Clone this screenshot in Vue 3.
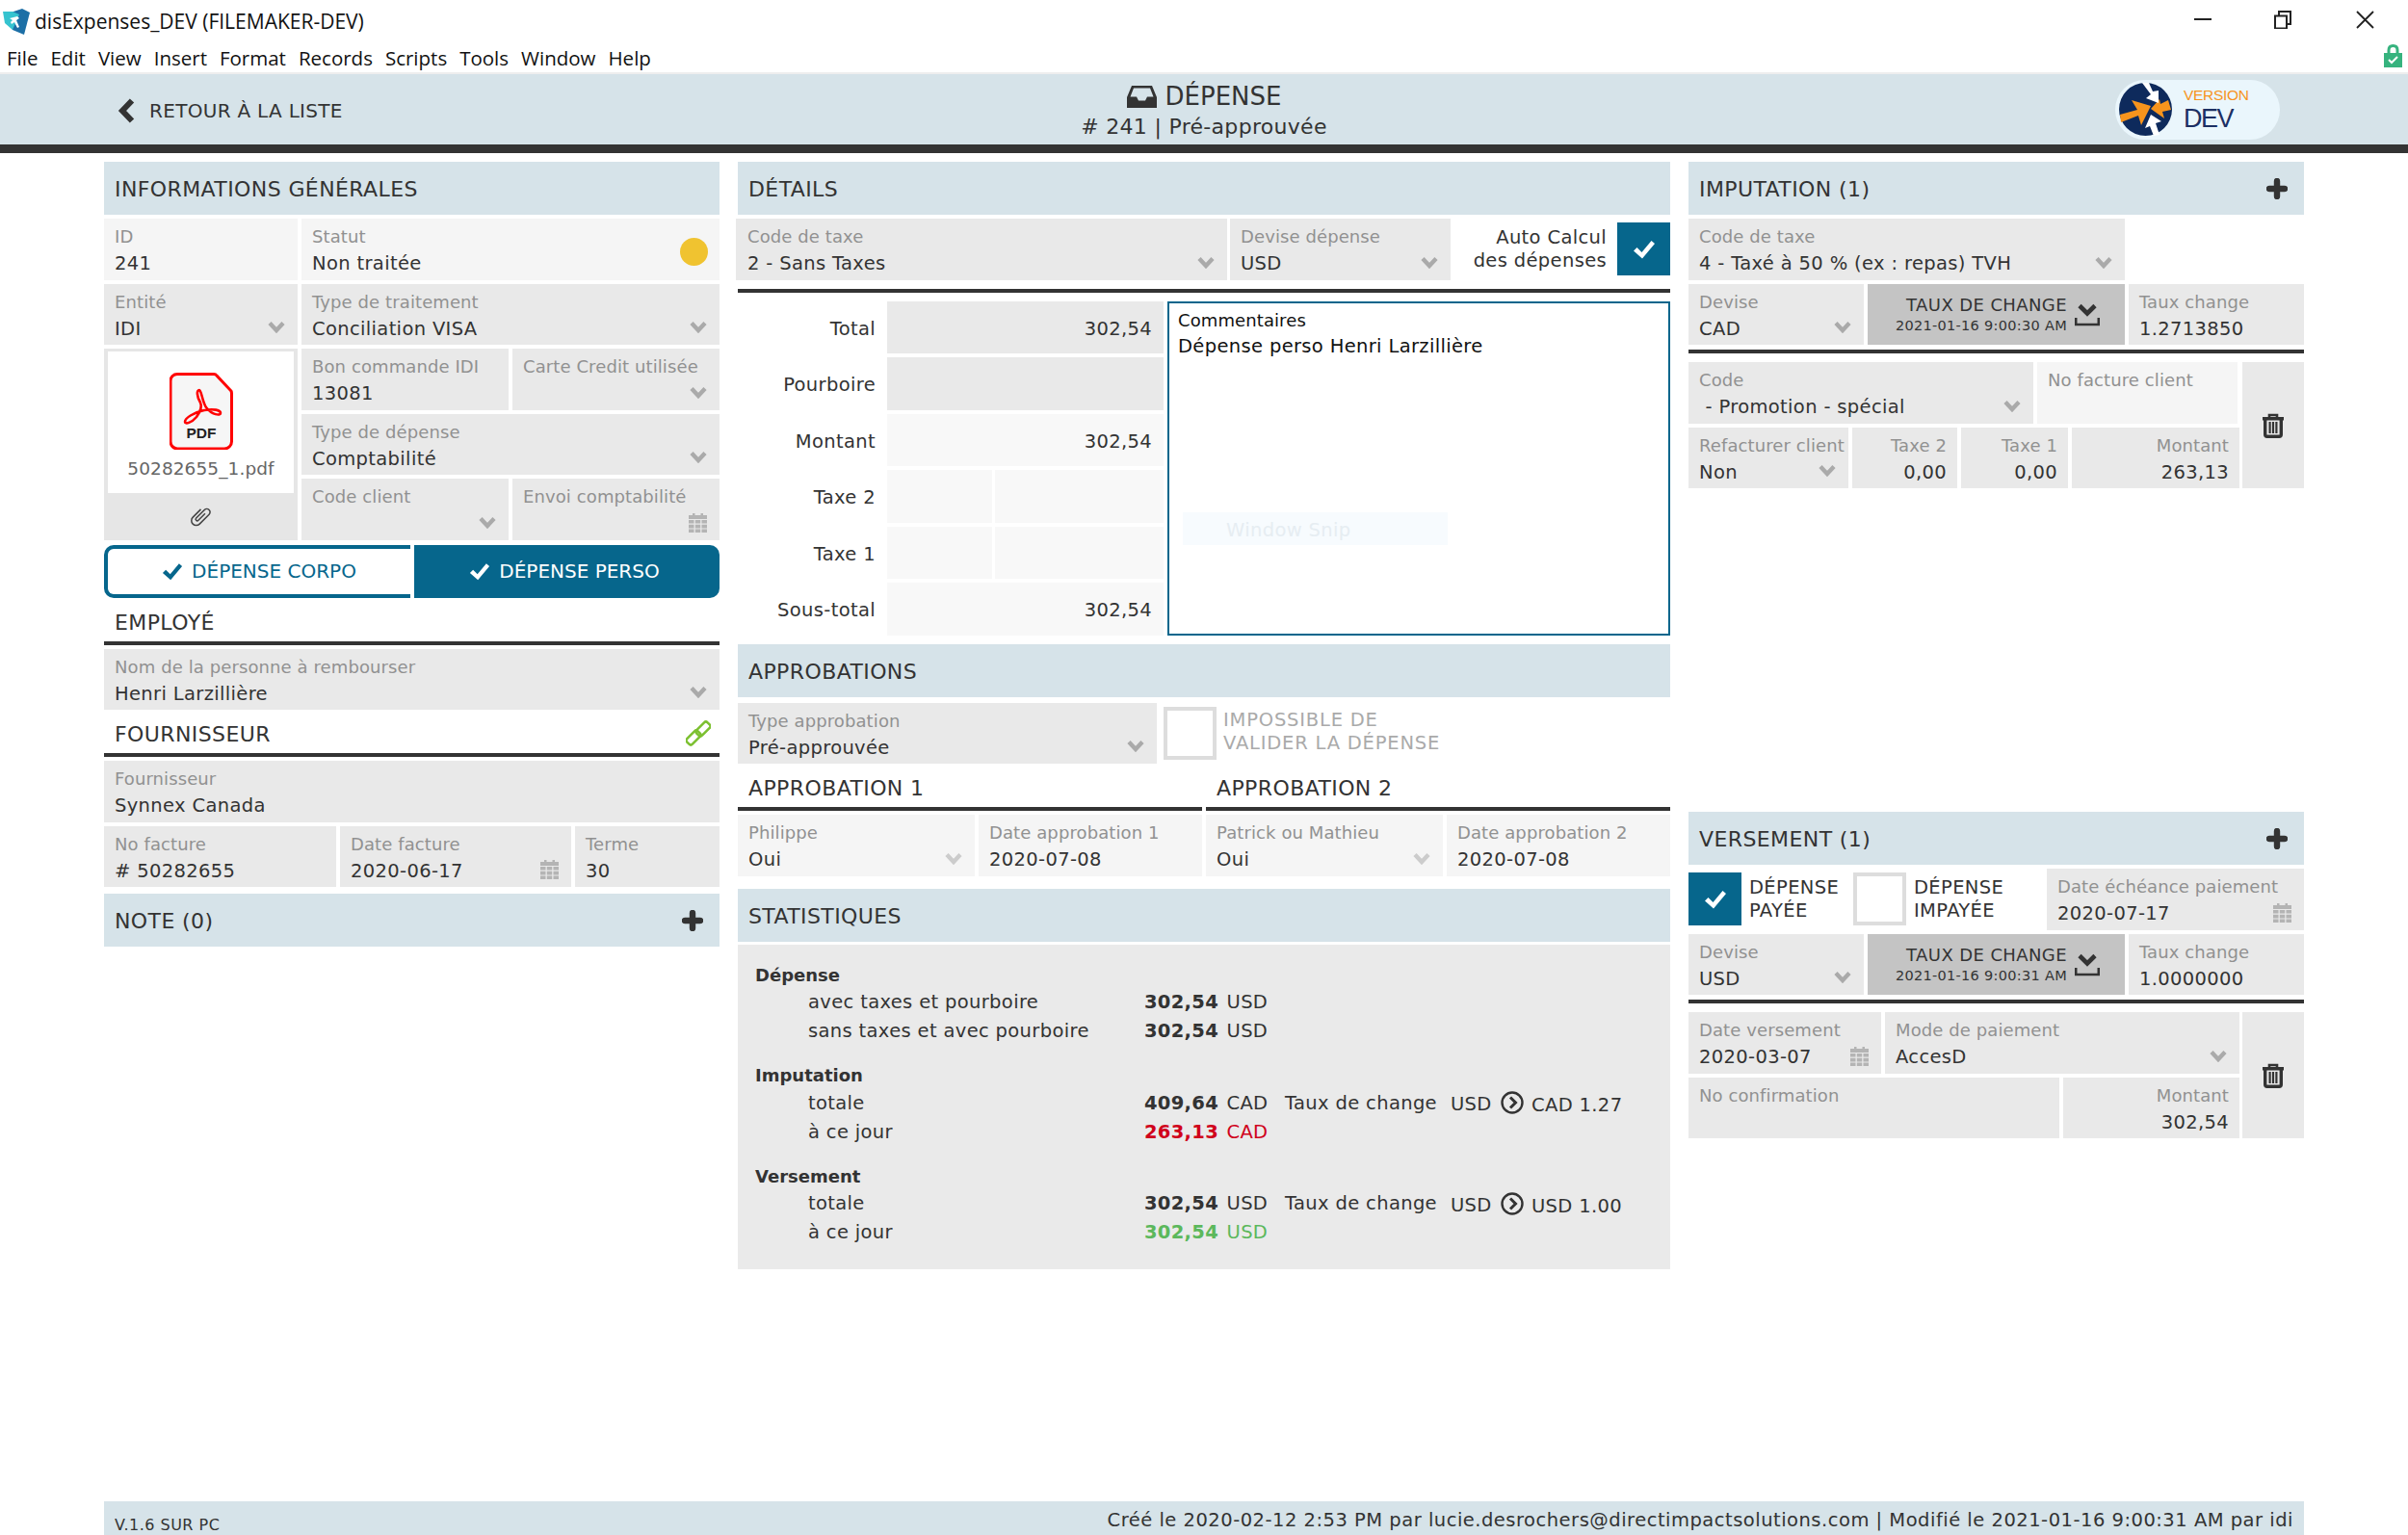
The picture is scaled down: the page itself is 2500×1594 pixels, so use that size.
<template>
  <div class="app">
    <!-- shared icons -->
    <svg class="defs" aria-hidden="true">
      <symbol id="i-chev" viewBox="0 0 18 13"><path d="M2 2.500 9 10l7-7.500" fill="none" stroke="currentColor" stroke-width="4.400" /></symbol>
      <symbol id="i-cal" viewBox="0 0 19 20">
        <path fill="currentColor" d="M4 0h2.500v3H4zM12.500 0H15v3h-2.500zM0 2h19v4H0zM0 7h5.500v3.600H0zM6.800 7h5.400v3.600H6.800zM13.500 7H19v3.600h-5.500zM0 11.800h5.500v3.600H0zM6.800 11.800h5.400v3.600H6.800zM13.500 11.800H19v3.600h-5.500zM0 16.500h5.500V20H0zM6.800 16.500h5.400V20H6.800zM13.500 16.500H19V20h-5.500z" />
      </symbol>
      <symbol id="i-check" viewBox="0 0 24 20"><path fill="currentColor" d="m1 11.500 3.500-3.500L9.500 13 19.500 1 23 4 10 19.500z" /></symbol>
      <symbol id="i-plus" viewBox="0 0 22 22"><path d="M11 3v16M3 11h16" stroke="currentColor" stroke-width="6.400" stroke-linecap="round" /></symbol>
      <symbol id="i-trash" viewBox="0 0 24 26">
        <path fill="none" stroke="currentColor" stroke-width="2.600" d="M8 5V2h8v3" />
        <path fill="currentColor" d="M1 4h22v3.500H1z" />
        <path fill="none" stroke="currentColor" stroke-width="3.400" d="M3.700 6v16.300q0 2 2 2h12.600q2 0 2-2V6" />
        <path fill="currentColor" d="M7.500 9h2.200v12H7.500zM10.900 9h2.200v12h-2.200zM14.300 9h2.200v12h-2.200z" />
      </symbol>
      <symbol id="i-dl" viewBox="0 0 26 24">
        <path d="M5 2.500 13 10.500l8-8" fill="none" stroke="currentColor" stroke-width="4.600" />
        <path d="M1.200 15v7h23.600v-7" fill="none" stroke="currentColor" stroke-width="2.600" />
      </symbol>
      <symbol id="i-go" viewBox="0 0 24 24">
        <circle cx="12" cy="12" r="10.500" fill="none" stroke="currentColor" stroke-width="2.400" />
        <path d="m10 6.500 5.500 5.500-5.500 5.500" fill="none" stroke="currentColor" stroke-width="3" />
      </symbol>
    </svg>

    <div class="titlebar">
      <svg class="fm-icon" viewBox="0 0 28 27">
        <path fill="#1c6fa6" d="M8 4 20 0l8 4-6 23-12-5z" />
        <path fill="#35c3cf" d="M0 3h10l7 3-7 16-8-7z" />
        <path fill="#fff" d="m7 10 8-2 2 2-3 2 3 7-2 1-3-6-3 2-1-2 2-2z" />
      </svg>
      <span class="title-text">disExpenses_DEV (FILEMAKER-DEV)</span>
      <div class="win-btns">
        <svg class="win-min" viewBox="0 0 18 2"><path d="M0 1h18" stroke="#222" stroke-width="2" /></svg>
        <svg class="win-max" viewBox="0 0 18 19"><path d="M1 5.500h12v13H1zM5 5V1h12v13h-4" fill="none" stroke="#222" stroke-width="2" /></svg>
        <svg class="win-close" viewBox="0 0 19 19"><path d="m1 1 17 17M18 1 1 18" stroke="#222" stroke-width="1.800" /></svg>
      </div>
    </div>

    <div class="menubar">
      <span v-for="item in menu" :key="item">{{ item }}</span>
      <svg class="lock" viewBox="0 0 19 24">
        <path d="M5 10V6q0-4.500 4.500-4.500T14 6v4" fill="none" stroke="#36b37e" stroke-width="3" />
        <path fill="#36b37e" d="M0 9h19v15H0z" />
        <path d="m5 16 3 3 6-6" fill="none" stroke="#fff" stroke-width="2" />
      </svg>
    </div>

    <header class="topbar">
      <div class="back">
        <svg class="back-ico" viewBox="0 0 19 26"><path d="M15 2.500 5 13l10 10.500" fill="none" stroke="#333" stroke-width="6" /></svg>
        <span>RETOUR À LA LISTE</span>
      </div>
      <div class="top-center">
        <div class="top-title">
          <svg class="tray" viewBox="0 0 31 23">
            <path fill="#333" d="M5 0h21l5 12v11H0V12zm2 2.500L3.500 11.500H10l2 4h7l2-4h6.500L24 2.500z" />
          </svg>
          <span>DÉPENSE</span>
        </div>
        <div class="top-sub"># 241 | Pré-approuvée</div>
      </div>
      <div class="version">
        <svg class="logo" viewBox="0 0 55 55">
          <circle cx="27.500" cy="27.500" r="27.500" fill="#0e2a5c" />
          <path fill="#f7941d" d="m1 33 18-5-6-10 20 6-10 20-3-10-18 7zM33 27l9-10 1 5 8-4 3 10-9 2 2 7z" />
          <path fill="#fff" d="M24 0h7l4 9 6-1v13l-13-5 5-4zM33 33l11 7-6 2 4 12-6 1-4-10-5 2z" />
        </svg>
        <div class="version-txt">
          <span class="version-lbl">VERSION</span>
          <span class="version-val">DEV</span>
        </div>
      </div>
    </header>

    <main class="columns">
      <!-- left column -->
      <section>
        <h3 class="head">INFORMATIONS GÉNÉRALES</h3>
        <div class="row r-id">
          <div class="field light"><div><div class="lbl">ID</div><div class="val">241</div></div></div>
          <div class="field light">
            <div><div class="lbl">Statut</div><div class="val">Non traitée</div></div>
            <span class="dot"></span>
          </div>
        </div>
        <div class="row r-id">
          <div class="field">
            <div><div class="lbl">Entité</div><div class="val">IDI</div></div>
            <svg class="chev"><use href="#i-chev" /></svg>
          </div>
          <div class="field">
            <div><div class="lbl">Type de traitement</div><div class="val">Conciliation VISA</div></div>
            <svg class="chev"><use href="#i-chev" /></svg>
          </div>
        </div>
        <div class="row r-id">
          <div class="pdf-box">
            <div class="pdf-card">
              <svg class="pdf-ico" viewBox="0 0 66 80">
                <path d="M8 1.500h38q2 0 3 1.500l15 16q.5 1 .5 3v49.500a7.500 7.500 0 0 1-7.500 7.500H8a7.500 7.500 0 0 1-7-7.500V8.500a7 7 0 0 1 7-7z" fill="#f6f6f6" stroke="#f00" stroke-width="3" />
                <path d="M31 18c-3 0-3 6 1 13 2 4 1 8-4 15-5 6-12 8-12 5 0-4 10-10 20-12s17 0 17 3-9 2-15-6c-4-6-5-18-7-18z" fill="none" stroke="#f00" stroke-width="2.600" />
                <text x="33" y="68" text-anchor="middle" class="pdf-txt">PDF</text>
              </svg>
              <div class="pdf-name">50282655_1.pdf</div>
            </div>
            <div class="pdf-attach">
              <svg class="clip" viewBox="0 0 30 30">
                <path d="M9 9v13a5.500 5.500 0 0 0 11 0V6.500a3.800 3.800 0 0 0-7.600 0V20a1.800 1.800 0 0 0 3.600 0V9" transform="rotate(45 15 15)" fill="none" stroke="#444" stroke-width="1.700" />
              </svg>
            </div>
          </div>
          <div class="stack">
            <div class="row-in r-half">
              <div class="field"><div><div class="lbl">Bon commande IDI</div><div class="val">13081</div></div></div>
              <div class="field">
                <div><div class="lbl">Carte Credit utilisée</div><div class="val">&nbsp;</div></div>
                <svg class="chev"><use href="#i-chev" /></svg>
              </div>
            </div>
            <div class="field">
              <div><div class="lbl">Type de dépense</div><div class="val">Comptabilité</div></div>
              <svg class="chev"><use href="#i-chev" /></svg>
            </div>
            <div class="row-in r-half">
              <div class="field">
                <div><div class="lbl">Code client</div><div class="val">&nbsp;</div></div>
                <svg class="chev"><use href="#i-chev" /></svg>
              </div>
              <div class="field">
                <div><div class="lbl">Envoi comptabilité</div><div class="val">&nbsp;</div></div>
                <svg class="cal"><use href="#i-cal" /></svg>
              </div>
            </div>
          </div>
        </div>
        <div class="toggle">
          <button class="tog tog-off"><svg class="tog-check"><use href="#i-check" /></svg>DÉPENSE CORPO</button>
          <button class="tog tog-on"><svg class="tog-check"><use href="#i-check" /></svg>DÉPENSE PERSO</button>
        </div>

        <div class="sub-head">EMPLOYÉ</div>
        <div class="row">
          <div class="field grow">
            <div><div class="lbl">Nom de la personne à rembourser</div><div class="val">Henri Larzillière</div></div>
            <svg class="chev"><use href="#i-chev" /></svg>
          </div>
        </div>

        <div class="sub-head">
          <span>FOURNISSEUR</span>
          <svg class="link-ico" viewBox="0 0 26 27">
            <g fill="none" stroke="#7cc030" stroke-width="2.500">
              <rect x="14" y="1" width="8" height="16" rx="2.500" transform="rotate(45 18 9)" />
              <rect x="4" y="10" width="8" height="16" rx="2.500" transform="rotate(45 8 18)" />
            </g>
          </svg>
        </div>
        <div class="row">
          <div class="field grow"><div><div class="lbl">Fournisseur</div><div class="val">Synnex Canada</div></div></div>
        </div>
        <div class="row r-fact">
          <div class="field"><div><div class="lbl">No facture</div><div class="val"># 50282655</div></div></div>
          <div class="field">
            <div><div class="lbl">Date facture</div><div class="val">2020-06-17</div></div>
            <svg class="cal"><use href="#i-cal" /></svg>
          </div>
          <div class="field"><div><div class="lbl">Terme</div><div class="val">30</div></div></div>
        </div>
        <h3 class="head note-head left-note">
          <span>NOTE (0)</span>
          <svg class="plus"><use href="#i-plus" /></svg>
        </h3>
      </section>

      <!-- middle column -->
      <section>
        <h3 class="head">DÉTAILS</h3>
        <div class="row r-det">
          <div class="field">
            <div><div class="lbl">Code de taxe</div><div class="val">2 - Sans Taxes</div></div>
            <svg class="chev"><use href="#i-chev" /></svg>
          </div>
          <div class="field">
            <div><div class="lbl">Devise dépense</div><div class="val">USD</div></div>
            <svg class="chev"><use href="#i-chev" /></svg>
          </div>
          <div class="auto">
            <div class="auto-txt">Auto Calcul<br />des dépenses</div>
            <div class="box box-on"><svg><use href="#i-check" /></svg></div>
          </div>
        </div>
        <div class="rule"></div>
        <div class="det-grid">
          <div class="amounts">
            <div v-for="a in amounts" :key="a.label" class="amount">
              <span class="amount-lbl">{{ a.label }}</span>
              <div v-if="a.split" class="amount-split">
                <span class="cell light"></span>
                <span class="cell light"></span>
              </div>
              <span v-else class="cell num" :class="{ light: a.light }">{{ a.value }}</span>
            </div>
          </div>
          <div class="comments">
            <div class="com-lbl">Commentaires</div>
            <div class="com-val">Dépense perso Henri Larzillière</div>
            <div class="snip">Window Snip</div>
          </div>
        </div>

        <h3 class="head appr-head">APPROBATIONS</h3>
        <div class="row r-appr">
          <div class="field">
            <div><div class="lbl">Type approbation</div><div class="val">Pré-approuvée</div></div>
            <svg class="chev"><use href="#i-chev" /></svg>
          </div>
          <div class="box box-off"></div>
          <div class="appr-txt">IMPOSSIBLE DE<br />VALIDER LA DÉPENSE</div>
        </div>
        <div class="appr-cols">
          <div>
            <div class="sub-head">APPROBATION 1</div>
            <div class="row r-apr">
              <div class="field light">
                <div><div class="lbl">Philippe</div><div class="val">Oui</div></div>
                <svg class="chev pale"><use href="#i-chev" /></svg>
              </div>
              <div class="field light"><div><div class="lbl">Date approbation 1</div><div class="val">2020-07-08</div></div></div>
            </div>
          </div>
          <div>
            <div class="sub-head">APPROBATION 2</div>
            <div class="row r-apr">
              <div class="field light">
                <div><div class="lbl">Patrick ou Mathieu</div><div class="val">Oui</div></div>
                <svg class="chev pale"><use href="#i-chev" /></svg>
              </div>
              <div class="field light"><div><div class="lbl">Date approbation 2</div><div class="val">2020-07-08</div></div></div>
            </div>
          </div>
        </div>

        <h3 class="head stat-head">STATISTIQUES</h3>
        <div class="stats">
          <div v-for="g in stats" :key="g.title" class="stat-group">
            <div class="stat-title">{{ g.title }}</div>
            <div v-for="r in g.rows" :key="r.label" class="stat-row" :class="r.tone">
              <span class="stat-lbl">{{ r.label }}</span>
              <span class="stat-amt"><b>{{ r.amount }}</b> {{ r.cur }}</span>
              <template v-if="r.rate">
                <span class="stat-rate">Taux de change</span>
                <span class="stat-from">{{ r.from }}</span>
                <svg class="go"><use href="#i-go" /></svg>
                <span class="stat-to">{{ r.rate }}</span>
              </template>
            </div>
          </div>
        </div>
      </section>

      <!-- right column -->
      <section>
        <h3 class="head note-head">
          <span>IMPUTATION (1)</span>
          <svg class="plus"><use href="#i-plus" /></svg>
        </h3>
        <div class="row r-code">
          <div class="field">
            <div><div class="lbl">Code de taxe</div><div class="val">4 - Taxé à 50 % (ex : repas) TVH</div></div>
            <svg class="chev"><use href="#i-chev" /></svg>
          </div>
        </div>
        <div class="row r-fx">
          <div class="field">
            <div><div class="lbl">Devise</div><div class="val">CAD</div></div>
            <svg class="chev"><use href="#i-chev" /></svg>
          </div>
          <div class="fx-btn">
            <div class="fx-txt">
              <div class="fx-title">TAUX DE CHANGE</div>
              <div class="fx-date">2021-01-16 9:00:30 AM</div>
            </div>
            <svg class="dl"><use href="#i-dl" /></svg>
          </div>
          <div class="field"><div><div class="lbl">Taux change</div><div class="val">1.2713850</div></div></div>
        </div>
        <div class="rule rule-r"></div>
        <div class="with-trash">
          <div class="stack">
            <div class="row-in r-imp1">
              <div class="field">
                <div><div class="lbl">Code</div><div class="val">&nbsp;- Promotion - spécial</div></div>
                <svg class="chev"><use href="#i-chev" /></svg>
              </div>
              <div class="field light"><div><div class="lbl">No facture client</div></div></div>
            </div>
            <div class="row-in r-imp2">
              <div class="field">
                <div><div class="lbl">Refacturer client</div><div class="val">Non</div></div>
                <svg class="chev"><use href="#i-chev" /></svg>
              </div>
              <div class="field right"><div><div class="lbl">Taxe 2</div><div class="val">0,00</div></div></div>
              <div class="field right"><div><div class="lbl">Taxe 1</div><div class="val">0,00</div></div></div>
              <div class="field right"><div><div class="lbl">Montant</div><div class="val">263,13</div></div></div>
            </div>
          </div>
          <div class="trash-cell"><svg class="trash"><use href="#i-trash" /></svg></div>
        </div>

        <h3 class="head note-head vers-head">
          <span>VERSEMENT (1)</span>
          <svg class="plus"><use href="#i-plus" /></svg>
        </h3>
        <div class="row r-paid">
          <div class="paid">
            <div class="box box-on"><svg><use href="#i-check" /></svg></div>
            <div class="paid-txt">DÉPENSE<br />PAYÉE</div>
            <div class="box box-off"></div>
            <div class="paid-txt">DÉPENSE<br />IMPAYÉE</div>
          </div>
          <div class="field">
            <div><div class="lbl">Date échéance paiement</div><div class="val">2020-07-17</div></div>
            <svg class="cal"><use href="#i-cal" /></svg>
          </div>
        </div>
        <div class="row r-fx">
          <div class="field">
            <div><div class="lbl">Devise</div><div class="val">USD</div></div>
            <svg class="chev"><use href="#i-chev" /></svg>
          </div>
          <div class="fx-btn">
            <div class="fx-txt">
              <div class="fx-title">TAUX DE CHANGE</div>
              <div class="fx-date">2021-01-16 9:00:31 AM</div>
            </div>
            <svg class="dl"><use href="#i-dl" /></svg>
          </div>
          <div class="field"><div><div class="lbl">Taux change</div><div class="val">1.0000000</div></div></div>
        </div>
        <div class="rule rule-r"></div>
        <div class="with-trash">
          <div class="stack">
            <div class="row-in r-ver1">
              <div class="field">
                <div><div class="lbl">Date versement</div><div class="val">2020-03-07</div></div>
                <svg class="cal"><use href="#i-cal" /></svg>
              </div>
              <div class="field">
                <div><div class="lbl">Mode de paiement</div><div class="val">AccesD</div></div>
                <svg class="chev"><use href="#i-chev" /></svg>
              </div>
            </div>
            <div class="row-in r-ver2">
              <div class="field"><div><div class="lbl">No confirmation</div></div></div>
              <div class="field right"><div><div class="lbl">Montant</div><div class="val">302,54</div></div></div>
            </div>
          </div>
          <div class="trash-cell"><svg class="trash"><use href="#i-trash" /></svg></div>
        </div>
      </section>
    </main>

    <footer class="foot">
      <span class="foot-v">V.1.6 SUR PC</span>
      <span class="foot-t">Créé le 2020-02-12 2:53 PM par lucie.desrochers@directimpactsolutions.com | Modifié le 2021-01-16 9:00:31 AM par idi</span>
    </footer>
  </div>
</template>

<script setup>
const menu = ['File', 'Edit', 'View', 'Insert', 'Format', 'Records', 'Scripts', 'Tools', 'Window', 'Help'];

const amounts = [
  { label: 'Total', value: '302,54' },
  { label: 'Pourboire', value: '' },
  { label: 'Montant', value: '302,54', light: true },
  { label: 'Taxe 2', split: true },
  { label: 'Taxe 1', split: true },
  { label: 'Sous-total', value: '302,54', light: true },
];

const stats = [
  {
    title: 'Dépense',
    rows: [
      { label: 'avec taxes et pourboire', amount: '302,54', cur: 'USD' },
      { label: 'sans taxes et avec pourboire', amount: '302,54', cur: 'USD' },
    ],
  },
  {
    title: 'Imputation',
    rows: [
      { label: 'totale', amount: '409,64', cur: 'CAD', from: 'USD', rate: 'CAD 1.27' },
      { label: 'à ce jour', amount: '263,13', cur: 'CAD', tone: 'red' },
    ],
  },
  {
    title: 'Versement',
    rows: [
      { label: 'totale', amount: '302,54', cur: 'USD', from: 'USD', rate: 'USD 1.00' },
      { label: 'à ce jour', amount: '302,54', cur: 'USD', tone: 'green' },
    ],
  },
];
</script>

<style>
html, body { margin: 0; background: #fff; }
</style>

<style scoped>
.app {
  width: 2500px;
  min-height: 1594px;
  display: flex;
  flex-direction: column;
  font-family: "DejaVu Sans", sans-serif;
  font-size: 19.500px;
  letter-spacing: 0.35px;
  color: #333;
  overflow: hidden;
}
.defs { width: 0; height: 0; position: absolute; }

/* window chrome */
.titlebar {
  height: 44px;
  display: flex;
  align-items: center;
  padding-left: 3px;
  font-family: "Open Sans", sans-serif;
  font-size: 21px;
  letter-spacing: 0;
  color: #111;
}
.fm-icon { width: 28px; height: 27px; margin-right: 5px; }
.win-btns { margin-left: auto; display: flex; align-items: center; height: 44px; margin-top: -4px; }
.win-min { width: 18px; height: 2px; margin-right: 65px; }
.win-max { width: 18px; height: 19px; margin-right: 67px; }
.win-close { width: 19px; height: 19px; margin-right: 35px; }
.menubar {
  height: 31px;
  display: flex;
  align-items: center;
  gap: 13px;
  padding-left: 7px;
  font-family: "Open Sans", sans-serif;
  font-size: 20.500px;
  letter-spacing: 0;
  color: #111;
  border-bottom: 2px solid #eee;
}
.lock { width: 19px; height: 24px; margin-left: auto; margin-right: 6px; margin-top: -3px; }

/* top band */
.topbar {
  height: 73px;
  background: #d6e3e9;
  border-bottom: 9px solid #333;
  display: grid;
  grid-template-columns: 1fr auto 1fr;
  align-items: center;
}
.back {
  display: flex;
  align-items: center;
  padding: 2px 0 0 122px;
  gap: 14px;
  font-size: 20px;
  letter-spacing: 0.3px;
}
.back-ico { width: 19px; height: 26px; }
.top-center { text-align: center; margin-top: 3px; }
.top-title { display: flex; justify-content: center; align-items: center; gap: 9px; font-size: 26px; height: 33px; letter-spacing: 0; }
.tray { width: 31px; height: 23px; }
.top-sub { font-size: 22px; height: 30px; line-height: 30px; letter-spacing: 0.3px; }
.version {
  justify-self: end;
  width: 171px;
  height: 62px;
  margin-right: 133px;
  border-radius: 31px;
  background: #eaf6fc;
  display: flex;
  align-items: center;
  padding-left: 4px;
  box-sizing: border-box;
}
.logo { width: 55px; height: 55px; }
.version-txt { display: flex; flex-direction: column; margin-left: 12px; font-family: "Liberation Sans", sans-serif; }
.version-lbl { font-size: 15.500px; color: #f7941d; line-height: 18px; letter-spacing: -0.3px; }
.version-val { font-size: 27px; color: #1c2f63; line-height: 30px; letter-spacing: -1.500px; }

/* columns */
.columns {
  display: grid;
  grid-template-columns: 639px 968px 639px;
  gap: 19px;
  padding: 9px 0 0 108px;
}
.head {
  margin: 0;
  height: 55px;
  line-height: 58px;
  padding: 0 11px;
  background: #d6e3e9;
  font-size: 22px;
  font-weight: 400;
  letter-spacing: 0.4px;
  color: #333;
  box-sizing: border-box;
}
.note-head { display: flex; justify-content: space-between; align-items: center; padding-right: 17px; }
.note-head span { margin-top: 3px; line-height: 28px; }
.left-note { margin-top: 7px; }
.sub-head {
  height: 49px;
  padding: 12px 11px 0;
  box-sizing: border-box;
  line-height: 28px;
  font-size: 22px;
  letter-spacing: 0.4px;
  border-bottom: 4px solid #333;
  display: flex;
  justify-content: space-between;
}
.plus { width: 22px; height: 22px; color: #333; }
.link-ico { width: 26px; height: 27px; margin: -1px -2px 0 0; }

.row { display: grid; gap: 4px; margin-top: 4px; }
.row-in { display: grid; gap: 4px; }
.stack { display: flex; flex-direction: column; gap: 4px; }
.r-id { grid-template-columns: 201px 1fr; }
.r-half { grid-template-columns: 1fr 1fr; }
.r-apr { grid-template-columns: 246px 1fr; }
.r-fact { grid-template-columns: 241px 240px 150px; }
.grow { grid-column: 1 / -1; }

.field {
  height: 63.500px;
  background: #e9e9e9;
  padding: 7px 13px 4px 11px;
  box-sizing: border-box;
  display: flex;
  justify-content: space-between;
  align-items: flex-end;
  min-width: 0;
}
.field > div { align-self: flex-start; white-space: nowrap; flex: 1; min-width: 0; }
.field.light { background: #f5f5f5; }
.field.right { justify-content: flex-end; text-align: right; padding-right: 11px; }
.lbl { height: 24px; line-height: 24px; font-size: 18px; letter-spacing: 0.1px; color: #919191; }
.val { height: 29px; line-height: 31px; font-size: 19.500px; color: #333; }
.chev { width: 18px; height: 13px; color: #aaa; flex: none; margin-bottom: 8px; }
.chev.pale { color: #ccc; }
.cal { width: 19px; height: 20px; color: #b4b4b4; flex: none; margin-bottom: 4px; }
.dot { width: 29px; height: 29px; border-radius: 50%; background: #f0c330; flex: none; align-self: center; margin-right: -1px; margin-top: 2px; }

.pdf-box { height: 198.500px; background: #e6e6e6; display: flex; flex-direction: column; padding: 3px 4px 0; box-sizing: border-box; }
.pdf-card { height: 147px; background: #fff; display: flex; flex-direction: column; align-items: center; padding-top: 22px; box-sizing: border-box; }
.pdf-ico { width: 66px; height: 80px; }
.pdf-txt { font: 700 15.500px "Liberation Sans", sans-serif; fill: #222; letter-spacing: 0; }
.pdf-name { font-size: 18.500px; letter-spacing: 0.1px; color: #666; line-height: 26px; margin-top: 7px; white-space: nowrap; }
.pdf-attach { flex: 1; display: flex; align-items: center; justify-content: center; }
.clip { width: 27px; height: 27px; }

.toggle { display: grid; grid-template-columns: 318px 317px; gap: 4px; margin-top: 5px; height: 55px; }
.tog {
  display: flex;
  align-items: center;
  justify-content: center;
  gap: 9px;
  border: none;
  padding: 0;
  font: 400 20px "DejaVu Sans", sans-serif;
  box-sizing: border-box;
}
.tog-off { background: #fff; color: #06668c; border: 4px solid #06668c; border-right: none; border-radius: 10px 0 0 10px; }
.tog-on { background: #06668c; color: #fff; border-radius: 0 10px 10px 0; padding-right: 5px; }
.tog-check { width: 22px; height: 19px; }

/* details */
.r-det { grid-template-columns: 510px 229px 1fr; gap: 3px; margin-left: -2px; }
.r-det .field:first-child { padding-left: 12px; }
.auto { display: flex; justify-content: flex-end; align-items: center; gap: 11px; }
.auto-txt { text-align: right; line-height: 24px; }
.box { width: 55px; height: 55px; box-sizing: border-box; flex: none; }
.box-on { background: #06668c; color: #fff; display: flex; align-items: center; justify-content: center; }
.box-on svg { width: 24px; height: 20px; }
.box-off { background: #fff; border: 4px solid #ddd; }
.rule { height: 4px; background: #333; margin: 9px 0; }
.rule-r { margin: 5px 0 9px; }

.det-grid { display: grid; grid-template-columns: 442px 1fr; gap: 4px; height: 347px; }
.amounts { display: grid; grid-auto-rows: 1fr; gap: 4px; }
.amount { display: grid; grid-template-columns: 143px 1fr; gap: 12px; align-items: stretch; }
.amount-lbl { text-align: right; align-self: center; margin-top: 3px; }
.amount-split { display: grid; grid-template-columns: 109px 1fr; gap: 3px; }
.cell { background: #e9e9e9; display: block; }
.cell.light { background: #f8f8f8; }
.cell.num { display: flex; align-items: center; justify-content: flex-end; padding: 3px 12px 0 0; }
.comments {
  position: relative;
  border: 2px solid #06668c;
  padding: 6px 9px;
  box-sizing: border-box;
  color: #111;
}
.com-lbl { font-size: 18px; line-height: 24px; letter-spacing: 0.1px; }
.com-val { line-height: 29px; }
.snip {
  position: absolute;
  left: 14px;
  top: 217px;
  width: 275px;
  height: 34px;
  line-height: 37px;
  padding-left: 45px;
  box-sizing: border-box;
  background: #f7fbfe;
  color: #e6edf2;
}

.appr-head { margin-top: 9px; }
.r-appr { grid-template-columns: 435px 55px 1fr; gap: 7px; margin-top: 6px; align-items: center; }
.appr-txt { color: #aaa; line-height: 24px; margin-top: -2px; letter-spacing: 0.8px; }
.appr-cols { display: grid; grid-template-columns: 1fr 1fr; gap: 4px; }
.stat-head { margin-top: 13px; }
.stats { margin-top: 3px; height: 337px; background: #eaeaea; padding: 19px 4px 0 18px; box-sizing: border-box; }
.stat-group { height: 104.500px; }
.stat-title { height: 26px; line-height: 26px; font-weight: 700; font-size: 18px; letter-spacing: 0; }
.stat-row { height: 30px; display: flex; align-items: center; padding-left: 55px; white-space: nowrap; }
.stat-lbl { width: 349px; flex: none; }
.stat-amt { width: 146px; flex: none; letter-spacing: 0.3px; }
.stat-amt b { margin-right: 2px; }
.stat-rate { width: 172px; flex: none; }
.stat-from { width: 52px; flex: none; margin-top: 3px; }
.stat-to { margin-top: 5px; margin-left: 8px; }
.go { width: 24px; height: 24px; }
.red .stat-amt { color: #d0021b; }
.green .stat-amt { color: #5cb85c; }

/* right column */
.r-code { grid-template-columns: 453px; }
.r-fx { grid-template-columns: 182px 267px 1fr; }
.fx-btn { height: 63.500px; background: #c4c4c4; display: flex; align-items: center; justify-content: flex-end; padding-right: 26px; box-sizing: border-box; }
.fx-txt { text-align: right; margin-right: 8px; }
.fx-title { font-size: 18px; line-height: 24px; letter-spacing: 0.4px; }
.fx-date { font-size: 14.500px; line-height: 18px; letter-spacing: 0.3px; white-space: nowrap; }
.dl { width: 26px; height: 24px; color: #333; margin-bottom: -2px; }
.with-trash { display: grid; grid-template-columns: 572px 64px; gap: 3px; }
.trash-cell { background: #e9e9e9; display: flex; align-items: center; justify-content: center; }
.trash { width: 24px; height: 26px; color: #333; }
.r-imp1 { grid-template-columns: 358px 1fr; }
.r-imp1 .light { margin-right: 2px; }
.r-imp2 { grid-template-columns: 166px 109px 111px 1fr; }
.r-ver1 { grid-template-columns: 200px 1fr; }
.r-ver2 { grid-template-columns: 385px 1fr; }
.vers-head { margin-top: 336px; }
.r-paid { grid-template-columns: 1fr 267px; margin-top: 4px; }
.paid { display: flex; align-items: center; }
.paid-txt { line-height: 24px; margin-left: 8px; width: 108px; }

.foot {
  margin: auto 108px 0;
  height: 35px;
  background: #d6e3e9;
  display: flex;
  justify-content: space-between;
  padding: 0 11px;
  box-sizing: border-box;
}
.foot-v { font-size: 16px; letter-spacing: 0.5px; line-height: 50px; height: 35px; overflow: hidden; }
.foot-t { letter-spacing: 0.5px; line-height: 40px; height: 35px; overflow: hidden; white-space: nowrap; }
</style>
